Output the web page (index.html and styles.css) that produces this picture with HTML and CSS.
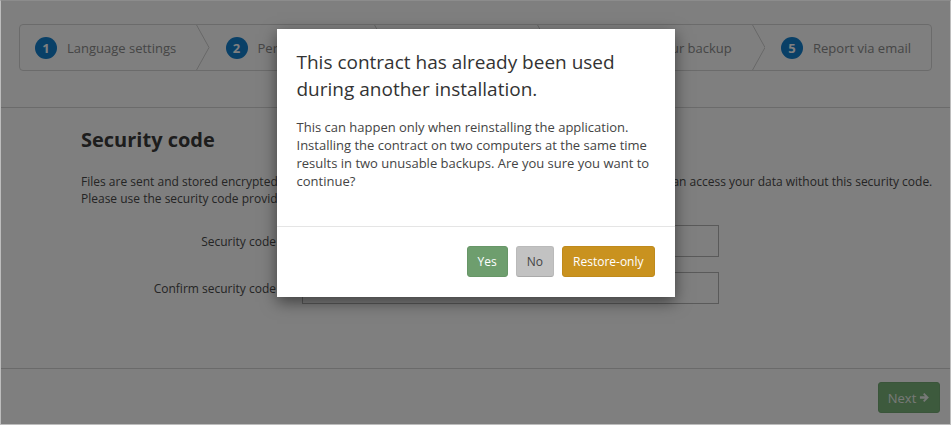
FILE: index.html
```html
<!DOCTYPE html>
<html lang="en">
  <head>
    <meta charset="UTF-8" />
    <meta name="viewport" content="width=device-width, initial-scale=1.0" />
    <title>Installation wizard</title>
    <link rel="stylesheet" href="styles.css">
  </head>

  <body>
    <div class="window">
      <header class="wizard-header">
        <ol class="steps">
          <li class="step"><span class="num">1</span>Language settings</li>
          <li class="sep"><svg width="14" height="47" viewBox="0 0 14 47"><polyline points="0,0 13,23.5 0,47" fill="none" stroke="#cfcfcf" stroke-width="1"/></svg></li>
          <li class="step"><span class="num">2</span>Personal details</li>
          <li class="sep"><svg width="14" height="47" viewBox="0 0 14 47"><polyline points="0,0 13,23.5 0,47" fill="none" stroke="#cfcfcf" stroke-width="1"/></svg></li>
          <li class="step"><span class="num">3</span>Your contract</li>
          <li class="sep"><svg width="14" height="47" viewBox="0 0 14 47"><polyline points="0,0 13,23.5 0,47" fill="none" stroke="#cfcfcf" stroke-width="1"/></svg></li>
          <li class="step"><span class="num">4</span>Schedule your backup</li>
          <li class="sep"><svg width="14" height="47" viewBox="0 0 14 47"><polyline points="0,0 13,23.5 0,47" fill="none" stroke="#cfcfcf" stroke-width="1"/></svg></li>
          <li class="step"><span class="num">5</span>Report via email</li>
        </ol>
      </header>

      <main class="content">
        <h3>Security code</h3>
        <p>
          Files are sent and stored encrypted with your personal code. Nobody, not even our staff or our partners, can access your data without this security code.<br>
          Please use the security code provided by your administrator or choose a new one.
        </p>
        <div class="form-row">
          <label for="code">Security code</label>
          <input id="code" type="password" />
        </div>
        <div class="form-row">
          <label for="code2">Confirm security code</label>
          <input id="code2" type="password" />
        </div>
      </main>

      <footer class="wizard-footer">
        <button type="button" class="btn-next">Next <svg width="11" height="11" viewBox="0 0 12 12"><path d="M1 4.6h5.6L4.4 2.4 5.8 1l5 5-5 5-1.4-1.4 2.2-2.2H1z" fill="currentColor"/></svg></button>
      </footer>

      <div class="backdrop">
        <div class="modal">
          <div class="modal-body">
            <h4>This contract has already been used during another installation.</h4>
            <p>This can happen only when reinstalling the application. Installing the contract on two computers at the same time results in two unusable backups. Are you sure you want to continue?</p>
          </div>
          <div class="modal-footer">
            <button type="button" class="btn btn-yes">Yes</button>
            <button type="button" class="btn btn-no">No</button>
            <button type="button" class="btn btn-restore">Restore-only</button>
          </div>
        </div>
      </div>
    </div>
  </body>
</html>
```

FILE: styles.css
```css
body {
  margin: 0;
  font-family: "Open Sans", "Liberation Sans", sans-serif;
  background-color: #fff;
}

.window {
  position: relative;
  height: 423px;
  border: 1px solid #bdbdbd;
  border-top-color: #8c8c8c;
  background-color: #fff;
  display: flex;
  flex-direction: column;
}

.wizard-header {
  padding: 23px 18px 0 18px;
  height: 83px;
  border-bottom: 1px solid #d6d6d6;
}

.steps {
  list-style: none;
  margin: 0;
  padding: 0;
  display: flex;
  height: 47px;
  box-sizing: border-box;
  border: 1px solid #d6d6d6;
  border-radius: 4px;
  width: 913px;
}

.step {
  display: flex;
  align-items: center;
  padding: 0 20px 0 16px;
  font-size: 13px;
  color: #8c8c8c;
  white-space: nowrap;
}

.step:first-child {
  padding-left: 15px;
}

.sep {
  width: 14px;
  height: 45px;
  overflow: hidden;
}

.sep svg {
  display: block;
  margin-top: -1px;
}

.num {
  display: inline-flex;
  align-items: center;
  justify-content: center;
  width: 22px;
  height: 22px;
  border-radius: 50%;
  background-color: #1280cf;
  color: #fff;
  font-size: 13px;
  font-weight: 700;
  margin-right: 10px;
}

.content {
  flex: 1;
  padding: 21px 10px 0 80px;
}

.content h3 {
  margin: 0;
  font-size: 20px;
  line-height: 22px;
  font-weight: 700;
  color: #3a3a3a;
}

.content p {
  margin: 22px 0 18px 0;
  font-size: 12px;
  line-height: 17px;
  color: #4a4a4a;
  white-space: nowrap;
}

.form-row {
  display: grid;
  grid-template-columns: 195px 417px;
  column-gap: 26px;
  align-items: center;
  margin-bottom: 15px;
}

.form-row label {
  text-align: right;
  font-size: 12px;
  color: #4a4a4a;
}

.form-row input {
  height: 32px;
  box-sizing: border-box;
  border: 1px solid #b4b4b4;
  border-radius: 0;
  margin: 0;
}

.wizard-footer {
  border-top: 1px solid #d4d4d4;
  height: 56px;
  display: flex;
  justify-content: flex-end;
  align-items: flex-start;
  padding: 13px 10px 0 0;
  box-sizing: border-box;
}

.btn-next {
  width: 62px;
  height: 31px;
  background-color: #7ab47a;
  border: 1px solid #74aa74;
  border-radius: 3px;
  color: #eef2ee;
  font-family: inherit;
  font-size: 13px;
  padding: 0;
  display: flex;
  align-items: center;
  justify-content: center;
  gap: 3px;
}

.backdrop {
  position: absolute;
  inset: 0;
  background-color: rgba(0, 0, 0, 0.5);
  display: flex;
  justify-content: center;
  align-items: flex-start;
  padding-top: 28px;
}

.modal {
  width: 398px;
  background-color: #fff;
  box-shadow: 0 5px 15px rgba(0, 0, 0, 0.5);
}

.modal-body {
  padding: 20px 20px 20px 20px;
}

.modal-body h4 {
  margin: 0 0 15px 0;
  font-size: 19px;
  line-height: 27px;
  font-weight: 400;
  color: #333;
}

.modal-body p {
  margin: 0 0 16px 0;
  font-size: 13px;
  line-height: 18px;
  color: #444;
}

.modal-footer {
  border-top: 1px solid #e5e5e5;
  padding: 19px 20px 20px 20px;
  display: flex;
  justify-content: flex-end;
  gap: 8px;
}

.btn {
  height: 31px;
  padding: 0 10px;
  font-family: inherit;
  font-size: 12px;
  border-radius: 3px;
  border: 1px solid transparent;
  cursor: pointer;
}

.btn-yes {
  background-color: #6e9e6e;
  border-color: #679667;
  color: #fff;
}

.btn-no {
  background-color: #c2c2c2;
  border-color: #bababa;
  border-bottom-color: #aaa;
  color: #444;
}

.btn-restore {
  background-color: #c9921f;
  border-color: #bf8a1c;
  color: #fff;
}
```
